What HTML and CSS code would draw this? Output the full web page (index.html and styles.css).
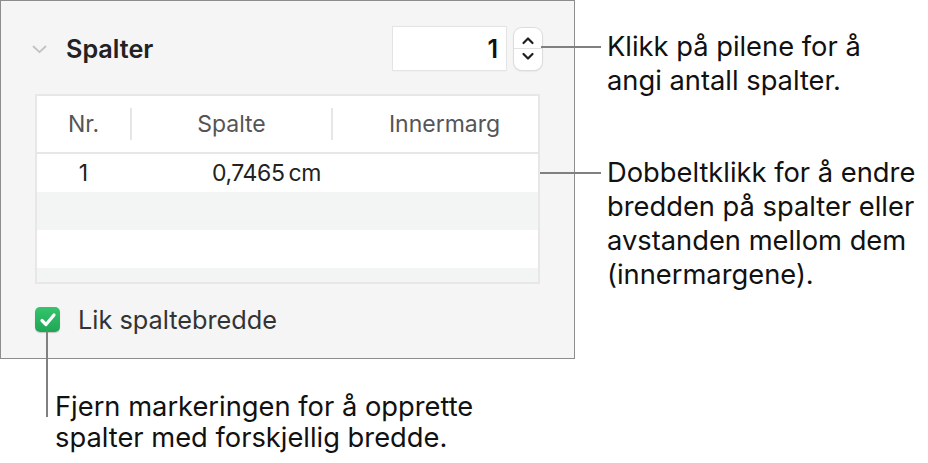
FILE: index.html
```html
<!DOCTYPE html>
<html lang="no">
<head>
<meta charset="utf-8">
<title>Spalter</title>
<link rel="stylesheet" href="styles.css">
</head>
<body>
<div class="page">
  <div class="top">
    <section class="panel">
      <div class="head">
        <svg class="disclosure" width="15" height="9" viewBox="0 0 15 9"><path d="M1.5 1.5 L7.5 7.2 L13.5 1.5" fill="none" stroke="#c2c2c2" stroke-width="1.8" stroke-linecap="round" stroke-linejoin="round"/></svg>
        <h2 class="title">Spalter</h2>
        <div class="numfield">1</div>
        <div class="stepper">
          <svg class="arrow" width="14" height="9" viewBox="0 0 14 9"><path d="M2.5 7 L7 2.5 L11.5 7" fill="none" stroke="#1e1e1e" stroke-width="2.2" stroke-linecap="round" stroke-linejoin="round"/></svg>
          <span class="stepdiv"></span>
          <svg class="arrow" width="14" height="9" viewBox="0 0 14 9"><path d="M2.5 2 L7 6.5 L11.5 2" fill="none" stroke="#1e1e1e" stroke-width="2.2" stroke-linecap="round" stroke-linejoin="round"/></svg>
        </div>
      </div>
      <div class="table">
        <div class="thead">
          <div class="th c1">Nr.</div>
          <span class="sep"></span>
          <div class="th c2">Spalte</div>
          <span class="sep"></span>
          <div class="th c3">Innermarg</div>
        </div>
        <div class="row white">
          <div class="td c1">1</div>
          <div class="td c2 num">0,7465<span class="unit">cm</span></div>
          <div class="td c3"></div>
        </div>
        <div class="row gray"></div>
        <div class="row white"></div>
        <div class="row gray short"></div>
      </div>
      <label class="check">
        <span class="box"><svg width="18" height="16" viewBox="0 0 18 16"><path d="M3 8.5 L7 12.5 L15 3" fill="none" stroke="#fff" stroke-width="3.2" stroke-linecap="round" stroke-linejoin="round"/></svg></span>
        <span class="checklabel">Lik spaltebredde</span>
      </label>
    </section>
    <div class="notes">
      <p class="note n1">Klikk på pilene for å<br>angi antall spalter.</p>
      <p class="note n2">Dobbeltklikk for å endre<br>bredden på spalter eller<br>avstanden mellom dem<br>(innermargene).</p>
    </div>
  </div>
  <p class="note n3">Fjern markeringen for å opprette<br>spalter med forskjellig bredde.</p>
  <span class="leader l1"></span>
  <span class="leader l2"></span>
  <span class="leader l3"></span>
</div>
</body>
</html>
```
FILE: styles.css
```css
* { box-sizing: border-box; }
html, body { margin: 0; padding: 0; background: #fff; }
body { font-family: Inter, Roboto, "Liberation Sans", Arial, sans-serif; color: #1d1d1f; }
.page { position: relative; width: 928px; height: 463px; overflow: hidden; }
.top { display: flex; align-items: flex-start; }

.panel {
  width: 575px; height: 359px;
  background: #f5f5f5;
  border: 1px solid #8d8d8d;
  padding: 26px 0 0 34px;
  display: flex; flex-direction: column;
}
.head { display: flex; align-items: center; height: 43px; }
.disclosure { margin-left: -3px; margin-top: 2px; }
.title { margin: 0 0 0 19px; font-size: 25.2px; font-weight: 600; color: #222; flex: 1; }
.numfield {
  width: 113px; height: 43px; background: #fff;
  box-shadow: 0 0 0 1px #e4e4e4, 0 1px 1px rgba(0,0,0,0.12);
  font-size: 25px; font-weight: 600; color: #111;
  display: flex; align-items: center; justify-content: flex-end; padding-right: 8px;
}
.stepper {
  width: 28px; height: 42px; margin-left: 8px; margin-right: 32px;
  background: #fff; border-radius: 8px;
  box-shadow: 0 0 0 1px #dcdcdc, 0 1px 2px rgba(0,0,0,0.15);
  display: flex; flex-direction: column; align-items: center; justify-content: center; gap: 3px;
}
.stepdiv { width: 28px; height: 1px; background: #e2e2e2; }

.table {
  margin-top: 24px; width: 505px; height: 190px;
  border: 2px solid #e7e7e7; background: #fff;
  display: flex; flex-direction: column;
}
.thead { display: flex; align-items: center; height: 58px; border-bottom: 2px solid #e7e7e7; flex: none; }
.th, .td { font-size: 23px; }
.th { color: #555; }
.c1 { width: 93px; text-align: center; }
.c2 { width: 199px; text-align: center; }
.c3 { flex: 1; padding-left: 18px; text-align: center; }
.sep { width: 2px; height: 32px; background: #e6e6e6; }
.row { height: 38px; display: flex; align-items: center; flex: none; }
.row .c2 { width: 201px; }
.td { color: #222; }
.td.num { text-align: right; padding-right: 10px; letter-spacing: -0.4px; }
.unit { margin-left: 4px; }
.white { background: #fff; }
.gray { background: #f3f4f4; }
.short { height: 14px; }

.check { display: flex; align-items: center; margin-top: 20px; }
.box {
  width: 25px; height: 25px; border-radius: 5px;
  background: linear-gradient(#35c46c, #1fa655);
  box-shadow: 0 1px 1px rgba(0,0,0,0.2);
  display: flex; align-items: center; justify-content: center;
}
.checklabel { margin-left: 18px; font-size: 25.3px; color: #333; }

.notes { padding-left: 32px; }
.note { margin: 0; font-size: 27.3px; line-height: 34px; color: #111; }
.n1 { margin-top: 30px; }
.n2 { margin-top: 58px; }
.n3 { margin: 32px 0 0 55px; line-height: 31px; }

.leader { position: absolute; background: #808080; }
.l1 { left: 541px; top: 46px; width: 60px; height: 2px; }
.l2 { left: 540px; top: 172px; width: 61px; height: 2px; }
.l3 { left: 46px; top: 331px; width: 2px; height: 86px; }
```
